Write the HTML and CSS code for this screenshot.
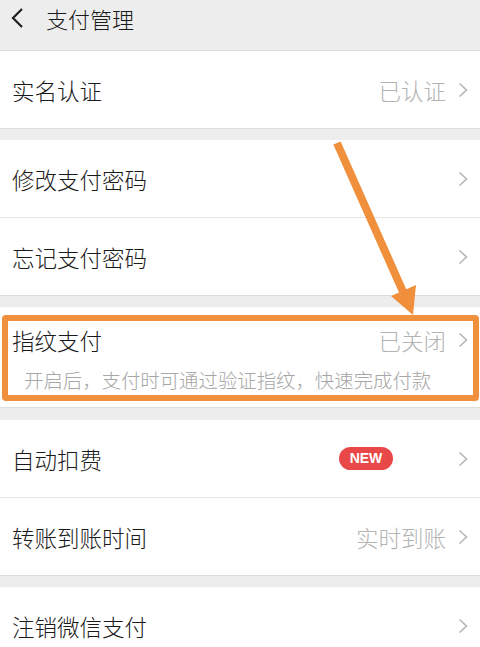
FILE: index.html
```html
<!DOCTYPE html>
<html lang="zh-CN">
<head>
<meta charset="utf-8">
<title>支付管理</title>
<link rel="stylesheet" href="styles.css">
</head>
<body>
<div class="page">
  <header class="header">
    <svg class="back" width="16" height="22" viewBox="0 0 16 22"><path d="M13 2 L4 11 L13 20" fill="none" stroke="#1f1f1f" stroke-width="2.2"/></svg>
    <span class="title">支付管理</span>
  </header>

  <section class="group">
    <div class="row"><span class="label">实名认证</span><span class="value">已认证</span><svg class="chev" width="10" height="16" viewBox="0 0 10 16"><path d="M1.5 1.5 L8.5 8 L1.5 14.5" fill="none" stroke="#b5b5b5" stroke-width="1.6"/></svg></div>
  </section>

  <section class="group">
    <div class="row"><span class="label">修改支付密码</span><svg class="chev" width="10" height="16" viewBox="0 0 10 16"><path d="M1.5 1.5 L8.5 8 L1.5 14.5" fill="none" stroke="#b5b5b5" stroke-width="1.6"/></svg></div>
    <div class="row"><span class="label">忘记支付密码</span><svg class="chev" width="10" height="16" viewBox="0 0 10 16"><path d="M1.5 1.5 L8.5 8 L1.5 14.5" fill="none" stroke="#b5b5b5" stroke-width="1.6"/></svg></div>
  </section>

  <section class="group finger">
    <div class="finger-top"><span class="label">指纹支付</span><span class="value">已关闭</span><svg class="chev" width="10" height="16" viewBox="0 0 10 16"><path d="M1.5 1.5 L8.5 8 L1.5 14.5" fill="none" stroke="#b5b5b5" stroke-width="1.6"/></svg></div>
    <div class="desc">开启后，支付时可通过验证指纹，快速完成付款</div>
  </section>

  <section class="group">
    <div class="row"><span class="label">自动扣费</span><span class="badge">NEW</span><svg class="chev" width="10" height="16" viewBox="0 0 10 16"><path d="M1.5 1.5 L8.5 8 L1.5 14.5" fill="none" stroke="#b5b5b5" stroke-width="1.6"/></svg></div>
    <div class="row"><span class="label">转账到账时间</span><span class="value">实时到账</span><svg class="chev" width="10" height="16" viewBox="0 0 10 16"><path d="M1.5 1.5 L8.5 8 L1.5 14.5" fill="none" stroke="#b5b5b5" stroke-width="1.6"/></svg></div>
  </section>

  <section class="group">
    <div class="row"><span class="label">注销微信支付</span><svg class="chev" width="10" height="16" viewBox="0 0 10 16"><path d="M1.5 1.5 L8.5 8 L1.5 14.5" fill="none" stroke="#b5b5b5" stroke-width="1.6"/></svg></div>
  </section>

  <div class="highlight"></div>
  <svg class="arrow" width="480" height="647" viewBox="0 0 480 647">
    <line x1="337" y1="143" x2="404" y2="294" stroke="#f0903d" stroke-width="8" stroke-linecap="butt"/>
    <polygon points="413,315 391,296 416,285" fill="#f0903d"/>
  </svg>
</div>
</body>
</html>
```

FILE: styles.css
```css
* { box-sizing: border-box; }
html, body {
  margin: 0;
  padding: 0;
  background: #ededed;
}
body {
  font-family: "Noto Sans CJK SC", "Noto Sans", sans-serif;
  font-weight: 300;
  color: #1a1a1a;
  width: 480px;
  height: 647px;
  overflow: hidden;
}
.page {
  position: relative;
  width: 480px;
}
.header {
  height: 51px;
  display: flex;
  align-items: flex-start;
  border-bottom: 1px solid #dcdcdc;
  background: #ededed;
}
.back {
  margin: 7px 0 0 9px;
}
.title {
  margin-left: 21px;
  font-size: 22px;
  line-height: 36px;
  color: #1a1a1a;
}
.group {
  background: #fff;
  border-bottom: 1px solid #dedede;
  margin-bottom: 11px;
}
.row {
  height: 78px;
  display: flex;
  align-items: center;
  padding: 0 12px 0 12px;
  position: relative;
}
.row + .row {
  border-top: 1px solid #e5e5e5;
  height: 78px;
}
.group .row:first-child { height: 77px; }
.label {
  font-size: 22.5px;
  flex: 1;
  line-height: 30px;
}
.value {
  font-size: 22.5px;
  color: #b3b3b3;
  margin-right: 12px;
  line-height: 30px;
}
.chev {
  display: block;
  flex: none;
}
.badge {
  background: #e84948;
  color: #fff;
  font-family: "Liberation Sans", Arial, sans-serif;
  font-weight: bold;
  font-size: 14px;
  width: 54px;
  height: 23px;
  line-height: 23px;
  text-align: center;
  border-radius: 12px;
  margin-right: 65px;
}
.finger {
  padding: 19px 0 14px;
  margin-bottom: 12px;
}
.finger-top {
  display: flex;
  align-items: center;
  height: 28px;
  padding: 0 12px 0 12px;
}
.desc {
  margin-top: 13px;
  padding-left: 24px;
  font-size: 19.4px;
  line-height: 26px;
  color: #a6a6a6;
  white-space: nowrap;
}
.highlight {
  position: absolute;
  left: 2px;
  top: 315px;
  width: 477px;
  height: 86px;
  border: 6px solid #f0903d;
  border-radius: 4px;
}
.arrow {
  position: absolute;
  left: 0;
  top: 0;
  pointer-events: none;
}
```
